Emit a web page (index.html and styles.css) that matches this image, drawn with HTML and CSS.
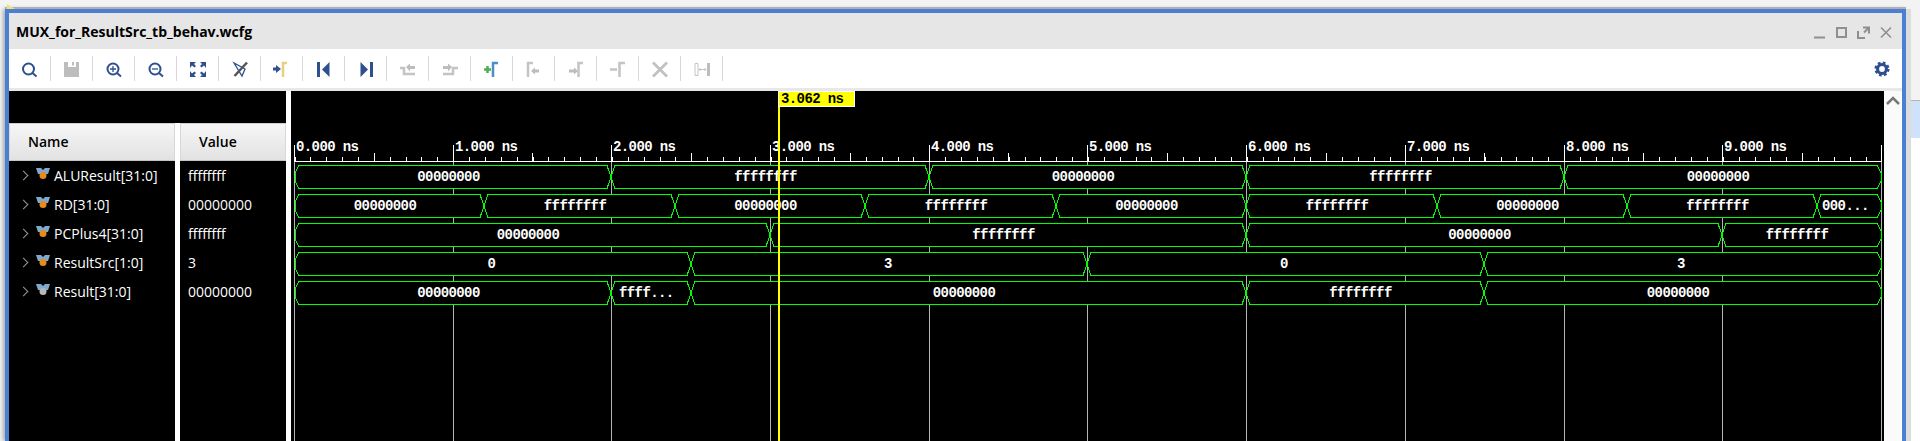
FILE: index.html
```html
<!DOCTYPE html>
<html>
<head>
	<meta charset="UTF-8">
	<title>MUX_for_ResultSrc_tb_behav.wcfg</title>
	<link rel="stylesheet" href="styles.css">
</head>
<body>
	<div class="desktop">
		<div class="window">
			<div class="title-bar">
				<span class="title">MUX_for_ResultSrc_tb_behav.wcfg</span>
				<svg class="win-controls" width="78" height="14" viewBox="0 0 78 14">
					<path d="M0 11.5H11" stroke-width="2"/>
					<rect x="23" y="2" width="9" height="9" stroke-width="2"/>
					<path d="M49 1.5H55V7.5M55 1.5L50 6.5M44 5V12H51" stroke-width="2"/>
					<path d="M67 1.5L77 11.5M77 1.5L67 11.5" stroke-width="1.6"/>
				</svg>
			</div>
			<div class="toolbar">
				<div class="tool"><svg viewBox="0 0 20 20"><circle class="ln" cx="8.5" cy="10" r="5.5"/><path class="ln" d="M12.5 14L16.5 17.5"/></svg></div>
				<div class="tool"><svg viewBox="0 0 20 20"><path class="off" d="M2 3H6V8H14V3H17V18H2ZM10 3H12V6.500H10Z"/></svg></div>
				<div class="tool"><svg viewBox="0 0 20 20"><circle class="ln" cx="9" cy="10" r="5.5"/><path class="ln thin" d="M6 10H12M9 7V13"/><path class="ln" d="M13 14L17 17.500"/></svg></div>
				<div class="tool"><svg viewBox="0 0 20 20"><circle class="ln" cx="9" cy="10" r="5.5"/><path class="ln thin" d="M6 10H12"/><path class="ln" d="M13 14L17 17.500"/></svg></div>
				<div class="tool"><svg viewBox="0 0 20 20"><path class="fill" d="M2 3H8L6 5L8 7L6.500 8.500L4 6.500L2 9ZM18 3V9L16 6.500L13.500 8.500L12 7L14 5L12 3ZM2 18V12L4 14.500L6.500 12.500L8 14L6 16L8 18ZM18 18H12L14 16L12 14L13.500 12.500L16 14.500L18 12Z"/></svg></div>
				<div class="tool"><svg viewBox="0 0 20 20"><path class="ln thin" d="M4 4L12 17L15 10Z"/><path class="slash" d="M17 3.500L4.500 17"/></svg></div>
				<div class="tool"><svg viewBox="0 0 20 20"><path class="fill" d="M1 8.500H4V6L9 10L4 14V11.500H1Z"/><path class="gate yellow" d="M11 18V4H15"/></svg></div>
				<div class="tool"><svg viewBox="0 0 20 20"><path class="fill" d="M3 3H6V18H3ZM15.500 3V18L8 10.500Z"/></svg></div>
				<div class="tool"><svg viewBox="0 0 20 20"><path class="fill" d="M4.500 3L12 10.500L4.500 18ZM14 3H17V18H14Z"/></svg></div>
				<div class="tool"><svg viewBox="0 0 20 20"><path class="gate grey" d="M2 9H6V15H17"/><path class="off" d="M8 8L12 4.500V7H17V10H12V12.500Z"/></svg></div>
				<div class="tool"><svg viewBox="0 0 20 20"><path class="gate grey" d="M3 15H13V9H18"/><path class="off" d="M12 8L8 4.500V7H3V10H8V12.500Z"/></svg></div>
				<div class="tool"><svg viewBox="0 0 20 20"><path class="plus" d="M2 10.500H9M5.500 7V14"/><path class="gate blue" d="M11 18V4H16"/></svg></div>
				<div class="tool"><svg viewBox="0 0 20 20"><path class="gate grey" d="M4 18V4H9"/><path class="off" d="M7 12L11 8.500V10.500H15V13.500H11V15.500Z"/></svg></div>
				<div class="tool"><svg viewBox="0 0 20 20"><path class="off" d="M12 12L8 8.500V10.500H3V13.500H8V15.500Z"/><path class="gate grey" d="M12.500 18V4H17"/></svg></div>
				<div class="tool"><svg viewBox="0 0 20 20"><path class="gate grey" d="M2 10.500H9M11.500 18V4H17"/></svg></div>
				<div class="tool"><svg viewBox="0 0 20 20"><path class="cross" d="M3 3.500L17 17.500M17 3.500L3 17.500"/></svg></div>
				<div class="tool"><svg viewBox="0 0 20 20"><path class="span" d="M3 4.500H6V16.500H3Z"/><path class="span" d="M7 10.500H14M8.500 9L7 10.500L8.500 12M12.500 9L14 10.500L12.500 12"/><path class="off" d="M15 4H18V17H15Z"/></svg></div>
				<svg class="gear" width="16" height="16" viewBox="0 0 18 18">
					<circle cx="9" cy="9" r="5" fill="none" stroke="#2f4f8f" stroke-width="3.500"/>
					<circle cx="9" cy="9" r="7" fill="none" stroke="#2f4f8f" stroke-width="3" stroke-dasharray="3 2.500"/>
				</svg>
			</div>
			<div class="band"></div>
			<div class="panes">
				<div class="sidebar">
					<div class="sidebar-top"></div>
					<div class="columns">
						<div class="col-name">
							<div class="col-head">Name</div>
							<div class="sig-row"><span class="chev"></span><svg class="medal" viewBox="0 0 14 14"><path class="ribbon" d="M0 1H5L7 3L9 1H14L12 7H2Z"/><circle class="dot" cx="7" cy="8.500" r="3.500"/></svg>ALUResult[31:0]</div>
							<div class="sig-row"><span class="chev"></span><svg class="medal" viewBox="0 0 14 14"><path class="ribbon" d="M0 1H5L7 3L9 1H14L12 7H2Z"/><circle class="dot" cx="7" cy="8.500" r="3.500"/></svg>RD[31:0]</div>
							<div class="sig-row"><span class="chev"></span><svg class="medal" viewBox="0 0 14 14"><path class="ribbon" d="M0 1H5L7 3L9 1H14L12 7H2Z"/><circle class="dot" cx="7" cy="8.500" r="3.500"/></svg>PCPlus4[31:0]</div>
							<div class="sig-row"><span class="chev"></span><svg class="medal" viewBox="0 0 14 14"><path class="ribbon" d="M0 1H5L7 3L9 1H14L12 7H2Z"/><circle class="dot" cx="7" cy="8.500" r="3.500"/></svg>ResultSrc[1:0]</div>
							<div class="sig-row"><span class="chev"></span><svg class="medal" viewBox="0 0 14 14"><path class="ribbon" d="M0 1H5L7 3L9 1H14L12 7H2Z"/><circle class="dot grey" cx="7" cy="8.500" r="3.500"/></svg>Result[31:0]</div>
						</div>
						<div class="col-value">
							<div class="col-head">Value</div>
							<div class="val-row">ffffffff</div>
							<div class="val-row">00000000</div>
							<div class="val-row">ffffffff</div>
							<div class="val-row">3</div>
							<div class="val-row">00000000</div>
						</div>
					</div>
				</div>
				<svg class="wave" width="1593" height="350" viewBox="291 91 1593 350">
					<!-- grid -->
					<path class="grid" d="M294.500 161V441M453.500 161V441M611.500 161V441M770.500 161V441M929.500 161V441M1087.500 161V441M1246.500 161V441M1405.500 161V441M1564.500 161V441M1722.500 161V441M1881.500 161V441"/>
					<!-- ruler -->
					<path class="major" d="M294.500 145V161M453.500 145V161M611.500 145V161M770.500 145V161M929.500 145V161M1087.500 145V161M1246.500 145V161M1405.500 145V161M1564.500 145V161M1722.500 145V161M1881.500 145V161M294 161.500H1882"/>
					<path class="minor" d="M294.500 159H1881"/>
					<path class="half" d="M373.500 157H1881"/>
					<g class="ruler-text">
						<text x="296" y="151">0.000 ns</text>
						<text x="455" y="151">1.000 ns</text>
						<text x="613" y="151">2.000 ns</text>
						<text x="772" y="151">3.000 ns</text>
						<text x="931" y="151">4.000 ns</text>
						<text x="1089" y="151">5.000 ns</text>
						<text x="1248" y="151">6.000 ns</text>
						<text x="1407" y="151">7.000 ns</text>
						<text x="1566" y="151">8.000 ns</text>
						<text x="1724" y="151">9.000 ns</text>
					</g>
					<!-- ALUResult -->
					<g class="bus" transform="translate(0 165.500)">
						<polygon points="295,7 299,0 607,0 611,11.500 607,23 299,23 295,16"/>
						<polygon points="611,11.500 615,0 925,0 929,11.500 925,23 615,23"/>
						<polygon points="929,11.500 933,0 1242,0 1246,11.500 1242,23 933,23"/>
						<polygon points="1246,11.500 1250,0 1560,0 1564,11.500 1560,23 1250,23"/>
						<polygon points="1564,11.500 1568,0 1877,0 1881,7 1881,16 1877,23 1568,23"/>
						<text x="448.500" y="15">00000000</text>
						<text x="765.500" y="15">ffffffff</text>
						<text x="1083" y="15">00000000</text>
						<text x="1400.500" y="15">ffffffff</text>
						<text x="1718" y="15">00000000</text>
					</g>
					<!-- RD -->
					<g class="bus" transform="translate(0 194.500)">
						<polygon points="295,7 299,0 480,0 484,11.500 480,23 299,23 295,16"/>
						<polygon points="484,11.500 488,0 671,0 675,11.500 671,23 488,23"/>
						<polygon points="675,11.500 679,0 861,0 865,11.500 861,23 679,23"/>
						<polygon points="865,11.500 869,0 1052,0 1056,11.500 1052,23 869,23"/>
						<polygon points="1056,11.500 1060,0 1242,0 1246,11.500 1242,23 1060,23"/>
						<polygon points="1246,11.500 1250,0 1433,0 1437,11.500 1433,23 1250,23"/>
						<polygon points="1437,11.500 1441,0 1623,0 1627,11.500 1623,23 1441,23"/>
						<polygon points="1627,11.500 1631,0 1813,0 1817,11.500 1813,23 1631,23"/>
						<polygon points="1817,11.500 1821,0 1877,0 1881,7 1881,16 1877,23 1821,23"/>
						<text x="385" y="15">00000000</text>
						<text x="575" y="15">ffffffff</text>
						<text x="765.500" y="15">00000000</text>
						<text x="956" y="15">ffffffff</text>
						<text x="1146.500" y="15">00000000</text>
						<text x="1337" y="15">ffffffff</text>
						<text x="1527.500" y="15">00000000</text>
						<text x="1717.500" y="15">ffffffff</text>
						<text class="start" x="1822" y="15">000...</text>
					</g>
					<!-- PCPlus4 -->
					<g class="bus" transform="translate(0 223.500)">
						<polygon points="295,7 299,0 766,0 770,11.500 766,23 299,23 295,16"/>
						<polygon points="770,11.500 774,0 1242,0 1246,11.500 1242,23 774,23"/>
						<polygon points="1246,11.500 1250,0 1718,0 1722,11.500 1718,23 1250,23"/>
						<polygon points="1722,11.500 1726,0 1877,0 1881,7 1881,16 1877,23 1726,23"/>
						<text x="528" y="15">00000000</text>
						<text x="1003.500" y="15">ffffffff</text>
						<text x="1479.500" y="15">00000000</text>
						<text x="1797" y="15">ffffffff</text>
					</g>
					<!-- ResultSrc -->
					<g class="bus" transform="translate(0 252.500)">
						<polygon points="295,7 299,0 687,0 691,11.500 687,23 299,23 295,16"/>
						<polygon points="691,11.500 695,0 1083,0 1087,11.500 1083,23 695,23"/>
						<polygon points="1087,11.500 1091,0 1480,0 1484,11.500 1480,23 1091,23"/>
						<polygon points="1484,11.500 1488,0 1877,0 1881,7 1881,16 1877,23 1488,23"/>
						<text x="491.500" y="15">0</text>
						<text x="888" y="15">3</text>
						<text x="1284" y="15">0</text>
						<text x="1681" y="15">3</text>
					</g>
					<!-- Result -->
					<g class="bus" transform="translate(0 281.500)">
						<polygon points="295,7 299,0 607,0 611,11.500 607,23 299,23 295,16"/>
						<polygon points="611,11.500 615,0 687,0 691,11.500 687,23 615,23"/>
						<polygon points="691,11.500 695,0 1242,0 1246,11.500 1242,23 695,23"/>
						<polygon points="1246,11.500 1250,0 1480,0 1484,11.500 1480,23 1250,23"/>
						<polygon points="1484,11.500 1488,0 1877,0 1881,7 1881,16 1877,23 1488,23"/>
						<text x="448.500" y="15">00000000</text>
						<text class="start" x="619" y="15">ffff...</text>
						<text x="964" y="15">00000000</text>
						<text x="1360.500" y="15">ffffffff</text>
						<text x="1678" y="15">00000000</text>
					</g>
					<!-- cursor -->
					<rect class="cursor" x="778" y="91" width="2" height="350"/>
					<rect class="cursor-tag" x="778.500" y="91.500" width="76" height="15"/>
					<text class="cursor-text" x="781" y="103">3.062 ns</text>
				</svg>
				<div class="scrollbar">
					<svg width="14" height="9" viewBox="0 0 14 9"><path d="M1 8L7 2L13 8" fill="none" stroke="#777" stroke-width="2.500"/></svg>
				</div>
			</div>
		</div>
		<div class="gutter">
			<div class="gutter-top"></div>
			<div class="gutter-blue"></div>
		</div>
	</div>
	<svg class="pin" width="8" height="5" viewBox="0 0 8 5"><path d="M0 0L8 5H0Z" fill="#eee27a"/></svg>
</body>
</html>
```

FILE: styles.css
```css
html, body {
	margin: 0;
	padding: 0;
	height: 441px;
	overflow: hidden;
	background-color: #f3f3f3;
	font-family: "Open Sans", "Noto Sans", Arial, sans-serif;
}
.desktop {
	display: flex;
	height: 441px;
	padding-left: 5px;
	box-sizing: border-box;
}
.window {
	width: 1901px;
	height: 432px;
	margin-top: 9px;
	box-sizing: border-box;
	border: 4px solid #4b7fd3;
	border-bottom: 0;
	box-shadow: 0 -2px 0 #b0b0b0, -2px 0 4px #a8a8a8;
	display: flex;
	flex-direction: column;
}
.title-bar {
	height: 36px;
	flex: none;
	background-color: #e6e6e6;
	display: flex;
	align-items: center;
	justify-content: space-between;
	padding: 0 10px 0 7px;
}
.title {
	font-size: 14px;
	font-weight: 700;
	color: #000;
}
.win-controls {
	fill: none;
	stroke: #8f8f8f;
	margin-top: 3px;
}
.toolbar {
	height: 39px;
	flex: none;
	background-color: #fff;
	display: flex;
	align-items: center;
	padding-right: 12px;
}
.tool {
	width: 42px;
	height: 25px;
	box-sizing: border-box;
	border-right: 1px solid #d8d8d8;
	display: flex;
	align-items: center;
	justify-content: center;
}
.tool svg {
	width: 20px;
	height: 20px;
}
.ln {
	fill: none;
	stroke: #2f4f8f;
	stroke-width: 2;
}
.ln.thin {
	stroke-width: 1.3;
}
.fill {
	fill: #2f4f8f;
}
.off {
	fill: #bdbdbd;
}
.slash {
	fill: none;
	stroke: #555;
	stroke-width: 2.5;
}
.gate {
	fill: none;
	stroke-width: 2.5;
}
.gate.yellow {
	stroke: #e6d27c;
}
.gate.grey {
	stroke: #c4c4c4;
}
.gate.blue {
	stroke: #4a90c8;
}
.plus {
	fill: none;
	stroke: #4caf50;
	stroke-width: 2.5;
}
.cross {
	fill: none;
	stroke: #c2c2c2;
	stroke-width: 2.8;
}
.span {
	fill: none;
	stroke: #c4c4c4;
	stroke-width: 1;
}
.gear {
	margin-left: auto;
}
.band {
	height: 3px;
	flex: none;
	background-color: #e8e8e8;
}
.panes {
	flex: 1;
	display: flex;
	min-height: 0;
	background-color: #fff;
}
.sidebar {
	width: 277px;
	flex: none;
	display: flex;
	flex-direction: column;
	margin-right: 5px;
}
.sidebar-top {
	height: 32px;
	flex: none;
	background-color: #000;
}
.columns {
	flex: 1;
	display: flex;
	gap: 5px;
}
.col-name {
	width: 166px;
	background-color: #000;
}
.col-value {
	width: 106px;
	background-color: #000;
}
.col-head {
	height: 38px;
	box-sizing: border-box;
	border-top: 1px solid #cfcfcf;
	border-bottom: 1px solid #c4c4c4;
	border-left: 1px solid #d8d8d8;
	border-right: 1px solid #d8d8d8;
	background: linear-gradient(#f6f6f6, #e2e2e2);
	font-size: 14px;
	font-weight: 600;
	line-height: 36px;
	color: #000;
	padding-left: 18px;
}
.sig-row, .val-row {
	height: 29px;
	display: flex;
	align-items: center;
	font-size: 14px;
	color: #fff;
	white-space: nowrap;
}
.val-row {
	padding-left: 8px;
}
.sig-row {
	padding-left: 11px;
}
.chev {
	width: 7px;
	height: 7px;
	box-sizing: border-box;
	border-top: 1.5px solid #999;
	border-right: 1.5px solid #999;
	transform: rotate(45deg);
	margin-right: 9px;
}
.medal {
	width: 14px;
	height: 14px;
	margin-right: 4px;
	margin-top: -3px;
}
.ribbon {
	fill: #7fa9cc;
}
.dot {
	fill: #e88a1c;
}
.dot.grey {
	fill: #b8b8b8;
}
.wave {
	display: block;
	flex: none;
	background-color: #000;
}
.wave text {
	font-family: "Liberation Mono", monospace;
	font-size: 14px;
	letter-spacing: -0.6px;
	font-weight: bold;
	fill: #fff;
}
.grid {
	stroke: #b4b4b4;
	stroke-width: 1;
	shape-rendering: crispEdges;
}
.major {
	stroke: #fff;
	stroke-width: 1;
	shape-rendering: crispEdges;
}
.minor {
	stroke: #fff;
	stroke-width: 4;
	stroke-dasharray: 1 14.87;
	shape-rendering: crispEdges;
}
.half {
	stroke: #fff;
	stroke-width: 8;
	stroke-dasharray: 1 157.7;
	shape-rendering: crispEdges;
}
.bus polygon {
	fill: #000;
	stroke: #00ff00;
	stroke-width: 1;
	shape-rendering: crispEdges;
}
.bus text {
	text-anchor: middle;
}
.bus text.start {
	text-anchor: start;
}
.cursor {
	fill: #ffff00;
	shape-rendering: crispEdges;
}
.cursor-tag {
	fill: #ffff00;
	stroke: #fff;
	stroke-width: 1;
	shape-rendering: crispEdges;
}
.wave .cursor-text {
	fill: #000;
}
.scrollbar {
	width: 17px;
	flex: none;
	background-color: #fafafa;
	display: flex;
	justify-content: center;
	align-items: flex-start;
	padding-top: 5px;
}
.gutter {
	flex: 1;
	border-left: 5px solid #dcdcdc;
	margin-top: 9px;
	background-color: #fff;
}
.gutter-top {
	height: 91px;
	background-color: #f3f3f3;
	border-bottom: 1px solid #b4b4b4;
}
.gutter-blue {
	height: 37px;
	background-color: #d0e1fb;
}
.pin {
	position: absolute;
	left: 7px;
	top: 4px;
}
```
